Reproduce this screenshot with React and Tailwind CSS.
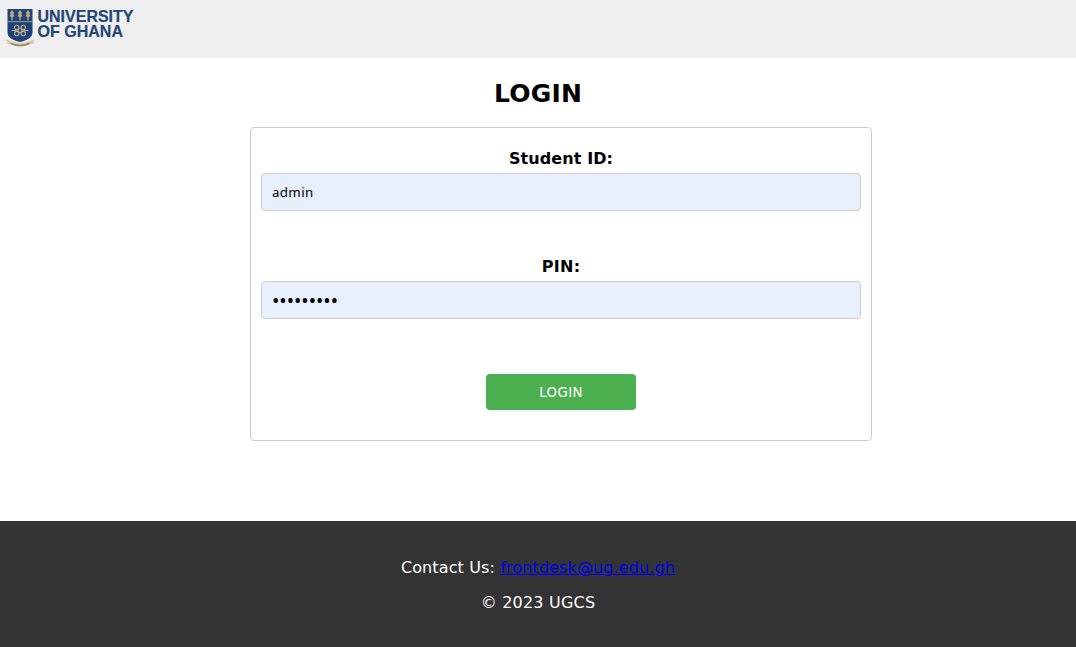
function Logo() {
  return (
    <svg width="140" height="58" viewBox="0 0 140 58" role="img" aria-label="University of Ghana">
      <path d="M7.500 9h25v23c0 5-4 8-12.500 10C11.500 40 7.500 37 7.500 32z" fill="#1d427b" />
      <path d="M7.500 21.700h25" stroke="#b9aa83" strokeWidth="0.9" />
      <g stroke="#d3b476" strokeWidth="1.100" fill="none">
        <path d="M12 11v9.500M20 11v9.500M28 11v9.500" />
      </g>
      <g fill="#d3b476">
        <path d="M12 10l2.300 3-1 1 1.200 2-2.500 2-2.500-2 1.200-2-1-1z" opacity="0.8" />
        <path d="M20 10l2.300 3-1 1 1.200 2-2.500 2-2.500-2 1.200-2-1-1z" opacity="0.8" />
        <path d="M28 10l2.300 3-1 1 1.200 2-2.500 2-2.500-2 1.200-2-1-1z" opacity="0.8" />
      </g>
      <g stroke="#c9b184" strokeWidth="1.100" fill="none">
        <circle cx="16.700" cy="27.400" r="2.200" />
        <circle cx="23.300" cy="27.400" r="2.200" />
        <circle cx="16.700" cy="33.600" r="2.200" />
        <circle cx="23.300" cy="33.600" r="2.200" />
        <circle cx="20" cy="30.500" r="2" />
        <path d="M11.500 30.500h5M23.500 30.500h5" />
      </g>
      <path d="M5 39.500l3 .3c7 4.300 17 4.300 24 0l3-.3-1.500 2.200.8 2.100-4 .1c-5.500 3.500-14 3.500-19.500 0l-4-.1.8-2.100z" fill="#dfc9a0" />
      <path d="M10.500 43.300c6 2.600 13.500 2.600 19 0" fill="none" stroke="#9a8a70" strokeWidth="1.500" />
      <g fill="#234679" stroke="#234679" strokeWidth="0.2" fontFamily="'Liberation Sans', Arial, sans-serif" fontWeight="700" fontSize="17">
        <text x="37.500" y="22" textLength="96" lengthAdjust="spacingAndGlyphs">UNIVERSITY</text>
        <text x="37.500" y="37.300" textLength="85.500" lengthAdjust="spacingAndGlyphs">OF GHANA</text>
      </g>
    </svg>
  );
}

export default function App() {
  return (
    <div className="flex min-h-screen flex-col bg-white font-['Verdana','DejaVu_Sans',sans-serif] text-base text-black">
      <header className="h-[58px] bg-[#efefef]">
        <Logo />
      </header>
      <main className="flex flex-col">
        <h1 className="mt-5 text-center text-[25px] leading-8 font-bold tracking-[0.2px]">LOGIN</h1>
        <form className="mt-[17px] ml-[250px] flex h-[314px] w-[622px] flex-col items-center rounded-[4px] border border-[#ccc] px-[10px] pt-[21px]" onSubmit={(e) => e.preventDefault()}>
          <label htmlFor="student" className="h-6 text-base leading-[20px] font-bold tracking-[0.1px]">Student ID:</label>
          <input id="student" type="text" defaultValue="admin" className="h-[38px] w-full rounded-[4px] border border-[#ccc] bg-[#e8f0fe] px-[10px] font-['Noto_Sans',sans-serif] text-[13.33px] tracking-[0.35px] outline-none" />
          <label htmlFor="pin" className="mt-[46px] h-6 text-base leading-[20px] font-bold tracking-[0.3px]">PIN:</label>
          <input id="pin" type="password" defaultValue="123456789" className="h-[38px] w-full rounded-[4px] border border-[#ccc] bg-[#e8f0fe] px-[10px] font-['Noto_Sans',sans-serif] text-[19.5px] outline-none" />
          <button type="submit" className="mt-[55px] h-9 w-[150px] rounded-[4px] bg-[#4caf50] pt-px text-[13.33px] tracking-[0.4px] text-white">LOGIN</button>
        </form>
      </main>
      <footer className="mt-20 flex flex-1 flex-col items-center bg-[#333] pt-[37px] text-white">
        <p className="text-base leading-[20px] tracking-[0.12px]">
          Contact Us: <a href="mailto:frontdesk@ug.edu.gh" className="text-[#0000ee] underline">frontdesk@ug.edu.gh</a>
        </p>
        <p className="mt-[15px] text-base leading-[20px] tracking-[0.2px]">© 2023 UGCS</p>
      </footer>
    </div>
  );
}
